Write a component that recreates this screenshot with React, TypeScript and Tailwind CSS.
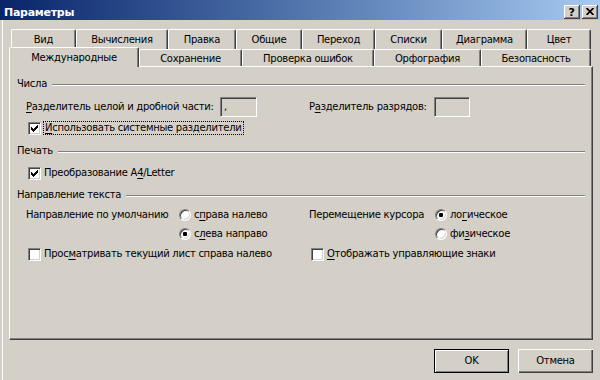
import React from "react";

const U = ({ children }: { children: React.ReactNode }) => (
  <span className="underline underline-offset-2 decoration-1">{children}</span>
);

function Check() {
  return (
    <svg width="7" height="7" viewBox="0 0 7 7" shapeRendering="crispEdges" className="block">
      <rect x="6" y="0" width="1" height="1" fill="#000" />
      <rect x="5" y="1" width="2" height="1" fill="#000" />
      <rect x="0" y="2" width="1" height="1" fill="#000" />
      <rect x="4" y="2" width="3" height="1" fill="#000" />
      <rect x="0" y="3" width="2" height="1" fill="#000" />
      <rect x="3" y="3" width="3" height="1" fill="#000" />
      <rect x="0" y="4" width="5" height="1" fill="#000" />
      <rect x="1" y="5" width="3" height="1" fill="#000" />
      <rect x="2" y="6" width="1" height="1" fill="#000" />
    </svg>
  );
}

function Checkbox({ checked }: { checked?: boolean }) {
  return (
    <div className="w-[13px] h-[13px] shrink-0 bg-white border border-t-[#808080] border-l-[#808080] border-r-white border-b-white shadow-[inset_1px_1px_#404040,inset_-1px_-1px_#d4d0c8] flex items-center justify-center">
      {checked && <Check />}
    </div>
  );
}

function Radio({ checked }: { checked?: boolean }) {
  return (
    <div className="w-[12px] h-[12px] shrink-0 rounded-full bg-white border border-t-[#808080] border-l-[#808080] border-r-white border-b-white shadow-[inset_1px_1px_#404040,inset_-1px_-1px_#d4d0c8] flex items-center justify-center">
      {checked && <div className="w-[4px] h-[4px] rounded-[1px] bg-black" />}
    </div>
  );
}

function Field({ w, children }: { w: string; children?: React.ReactNode }) {
  return (
    <div
      className={
        w +
        " h-[20px] shrink-0 bg-[#d4d0c8] border border-t-[#808080] border-l-[#808080] border-r-white border-b-white shadow-[inset_1px_1px_#404040,inset_-1px_-1px_#d4d0c8] flex items-center pl-[3px]"
      }
    >
      {children}
    </div>
  );
}

function Header({ children }: { children: React.ReactNode }) {
  return (
    <div className="h-[12px] flex items-center">
      <span className="whitespace-nowrap">{children}</span>
      <div className="flex-1 ml-[5px] mt-px h-0 border-t border-t-[#808080] border-b border-b-white" />
    </div>
  );
}

const row1 = [
  { label: "Вид", w: "w-[65px]" },
  { label: "Вычисления", w: "w-[92px]" },
  { label: "Правка", w: "w-[68px]" },
  { label: "Общие", w: "w-[66px]" },
  { label: "Переход", w: "w-[73px]" },
  { label: "Списки", w: "w-[67px]" },
  { label: "Диаграмма", w: "w-[85px]" },
  { label: "Цвет", w: "w-[64px]" },
];

const row2 = [
  { label: "Сохранение", w: "w-[103px]" },
  { label: "Проверка ошибок", w: "w-[132px]" },
  { label: "Орфография", w: "w-[107px]" },
  { label: "Безопасность", w: "w-[110px]" },
];

const tabBase =
  "shrink-0 text-center whitespace-nowrap bg-[#d4d0c8] border-t border-l border-r border-t-white border-l-white border-r-[#404040] rounded-t-[2px] shadow-[inset_-1px_0_#808080]";

export default function App() {
  return (
    <div className="w-[600px] h-[380px] bg-[#d4d0c8] overflow-hidden flex flex-col font-['DejaVu_Sans',sans-serif] text-[10px] leading-[12px] tracking-[-0.27px] text-black select-none">
      {/* Title bar */}
      <div className="h-[20px] shrink-0 flex items-center bg-linear-to-r from-[#0a246a] to-[#a6caf0] pt-[4px] pl-[4px] pr-[2px]">
        <span className="font-bold text-white text-[11px] leading-[13px]">Параметры</span>
        <div className="ml-auto flex gap-[2px]">
          <div className="w-[16px] h-[14px] bg-[#d4d0c8] shadow-[inset_-1px_-1px_#404040,inset_1px_1px_#fff,inset_-2px_-2px_#808080] flex items-center justify-center font-bold text-[11px] leading-[11px] pr-px">
            ?
          </div>
          <div className="w-[16px] h-[14px] bg-[#d4d0c8] shadow-[inset_-1px_-1px_#404040,inset_1px_1px_#fff,inset_-2px_-2px_#808080] flex items-center justify-center">
            <svg width="8" height="7" viewBox="0 0 8 7" className="block -mt-px">
              <path d="M0.5 0 L7.5 7 M7.5 0 L0.5 7" stroke="#000" strokeWidth="1.7" />
            </svg>
          </div>
        </div>
      </div>

      {/* Body */}
      <div className="flex-1 ml-[2px] border-l border-white pt-[9px] flex flex-col">
        {/* Tab row 1 */}
        <div className="flex h-[20px] pl-[8px]">
          {row1.map((t) => (
            <div key={t.label} className={tabBase + " " + t.w + " h-[20px] pt-[4px]"}>
              {t.label}
            </div>
          ))}
        </div>
        {/* Tab row 2 */}
        <div className="flex items-end h-[20px] -mt-[2px] pl-[6px]">
          <div className={tabBase + " relative z-10 w-[130px] h-[20px] pt-[4px]"}>Международные</div>
          {row2.map((t) => (
            <div key={t.label} className={tabBase + " " + t.w + " h-[18px] pt-[3px]"}>
              {t.label}
            </div>
          ))}
        </div>

        {/* Panel */}
        <div className="-mt-px ml-[6px] w-[584px] h-[274px] shrink-0 border border-t-white border-l-white border-r-[#404040] border-b-[#404040] shadow-[inset_-1px_-1px_#808080] px-[7px] pt-[11px] flex flex-col">
          <Header>Числа</Header>

          <div className="mt-[7px] h-[20px] flex items-center">
            <div className="w-[283px] flex items-center">
              <span className="ml-[9px] w-[194px] whitespace-nowrap">
                <U>Р</U>азделитель целой и дробной части:
              </span>
              <Field w="w-[37px]">,</Field>
            </div>
            <span className="ml-[9px] w-[125px] whitespace-nowrap">
              Р<U>а</U>зделитель разрядов:
            </span>
            <Field w="w-[36px]" />
          </div>

          <div className="mt-[4px] h-[14px] flex items-center">
            <div className="ml-[11px]">
              <Checkbox checked />
            </div>
            <span className="ml-[2px] h-[14px] border border-dotted border-black px-px whitespace-nowrap">
              <U>И</U>спользовать системные разделители
            </span>
          </div>

          <div className="mt-[10px]">
            <Header>Печать</Header>
          </div>

          <div className="mt-[9px] h-[14px] flex items-center">
            <div className="ml-[11px]">
              <Checkbox checked />
            </div>
            <span className="ml-[3px] whitespace-nowrap">
              Преобразование A<U>4</U>/Letter
            </span>
          </div>

          <div className="mt-[9px]">
            <Header>Направление текста</Header>
          </div>

          <div className="mt-[6px] h-[16px] flex items-center">
            <div className="w-[283px] flex items-center">
              <span className="ml-[9px] w-[153px] whitespace-nowrap">Направление по умолчанию</span>
              <Radio />
              <span className="ml-[3px] whitespace-nowrap">
                с<U>п</U>рава налево
              </span>
            </div>
            <span className="ml-[9px] w-[126px] whitespace-nowrap">Перемещение курсора</span>
            <Radio checked />
            <span className="ml-[3px] whitespace-nowrap">
              ло<U>г</U>ическое
            </span>
          </div>

          <div className="mt-[3px] h-[16px] flex items-center">
            <div className="w-[283px] flex items-center">
              <div className="ml-[162px]">
                <Radio checked />
              </div>
              <span className="ml-[3px] whitespace-nowrap">
                с<U>л</U>ева направо
              </span>
            </div>
            <div className="ml-[135px]">
              <Radio />
            </div>
            <span className="ml-[3px] whitespace-nowrap">
              фи<U>з</U>ическое
            </span>
          </div>

          <div className="mt-[5px] h-[14px] flex items-center">
            <div className="w-[283px] flex items-center">
              <div className="ml-[11px]">
                <Checkbox />
              </div>
              <span className="ml-[3px] whitespace-nowrap">
                Прос<U>м</U>атривать текущий лист справа налево
              </span>
            </div>
            <div className="ml-[11px]">
              <Checkbox />
            </div>
            <span className="ml-[3px] whitespace-nowrap">
              <U>О</U>тображать управляющие знаки
            </span>
          </div>
        </div>

        {/* Buttons */}
        <div className="mt-[9px] flex justify-end gap-[9px] pr-[7px]">
          <div className="w-[75px] h-[24px] border border-black shadow-[inset_1px_1px_#fff,inset_-1px_-1px_#808080] flex items-center justify-center">
            OK
          </div>
          <div className="w-[75px] h-[24px] shadow-[inset_1px_1px_#fff,inset_-1px_-1px_#404040,inset_-2px_-2px_#808080] flex items-center justify-center">
            Отмена
          </div>
        </div>
      </div>
    </div>
  );
}
